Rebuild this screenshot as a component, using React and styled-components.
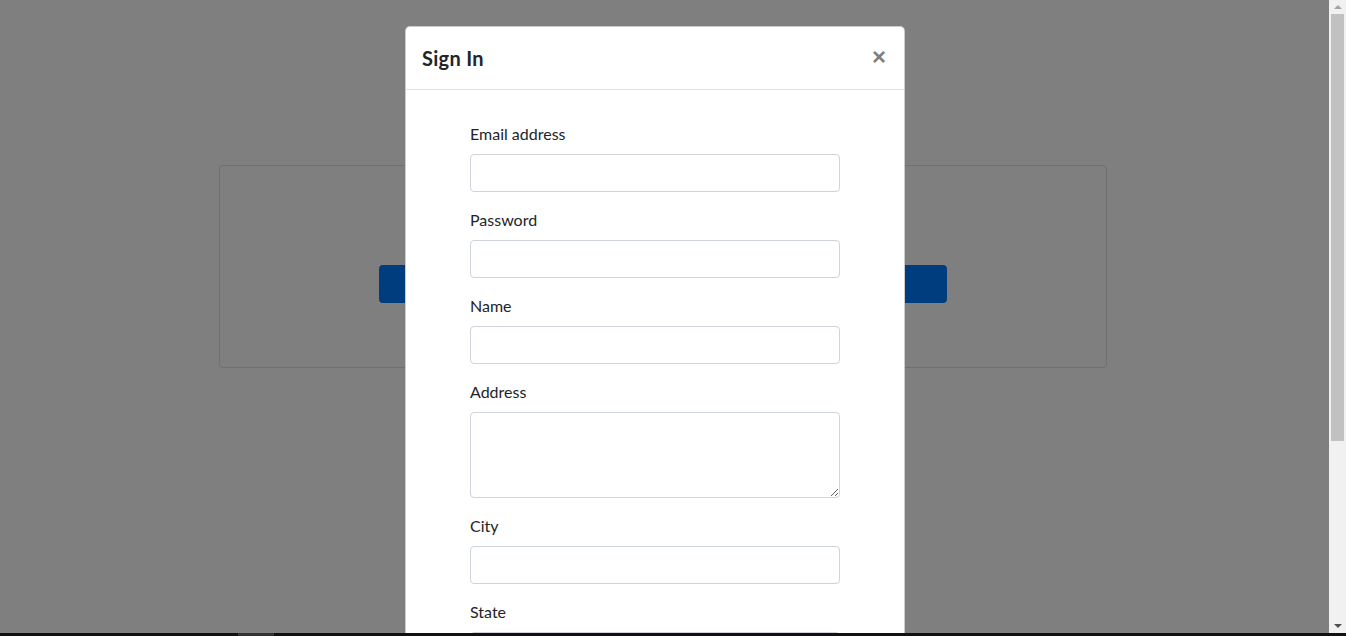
import React from 'react'
import styled, { createGlobalStyle } from 'styled-components'

const GlobalStyle = createGlobalStyle`
  html, body {
    margin: 0;
    padding: 0;
    overflow: hidden;
  }
  body {
    font-family: 'Lato', 'Open Sans', sans-serif;
    color: #212529;
  }
  * {
    box-sizing: border-box;
  }
`

const Screen = styled.div`
  width: 1346px;
  height: 636px;
  display: flex;
  flex-direction: column;
`

const Window = styled.div`
  flex: 1;
  display: flex;
  min-height: 0;
`

const Viewport = styled.div`
  position: relative;
  flex: 1;
  background: #fff;
  overflow: hidden;
`

const Page = styled.div`
  padding-top: 165px;
  padding-right: 3px;
`

const Card = styled.div`
  width: 888px;
  height: 203px;
  margin: 0 auto;
  border: 1px solid rgba(0, 0, 0, 0.125);
  border-radius: 4px;
  padding: 20px 159px;
  text-align: center;
`

const CardTitle = styled.h4`
  margin: 16px 0 39px;
  font-size: 24px;
  font-weight: 500;
  line-height: 24px;
`

const PrimaryButton = styled.button`
  display: block;
  width: 568px;
  height: 38px;
  border: none;
  border-radius: 4px;
  background: #007bff;
  color: #fff;
  font-family: inherit;
  font-size: 16px;
`

const Backdrop = styled.div`
  position: absolute;
  inset: 0;
  background: rgba(0, 0, 0, 0.5);
  display: flex;
  justify-content: center;
  align-items: flex-start;
  padding: 26px 19px 0 0;
`

const Modal = styled.div`
  width: 500px;
  background: #fff;
  border: 1px solid rgba(0, 0, 0, 0.2);
  border-radius: 5px;
  display: flex;
  flex-direction: column;
`

const ModalHeader = styled.div`
  display: flex;
  align-items: flex-start;
  padding: 16px;
  border-bottom: 1px solid #dee2e6;
`

const ModalTitle = styled.h5`
  margin: 0;
  font-size: 20px;
  font-weight: 700;
  line-height: 30px;
  letter-spacing: 0.3px;
  color: #212529;
`

const CloseButton = styled.button`
  margin: -17px -14px -16px auto;
  padding: 16px;
  border: none;
  background: transparent;
  font-family: 'Liberation Sans', Arial, sans-serif;
  font-size: 24px;
  font-weight: 700;
  line-height: 30px;
  color: #000;
  opacity: 0.5;
`

const ModalBody = styled.div`
  padding: 16px;
`

const Form = styled.form`
  width: 370px;
  margin: 16px auto 0;
`

const Group = styled.div`
  margin-bottom: 16px;
`

const Label = styled.label`
  display: inline-block;
  margin-bottom: 8px;
  font-size: 16px;
  line-height: 24px;
  color: #212529;
`

const Input = styled.input`
  display: block;
  width: 100%;
  height: 38px;
  padding: 6px 12px;
  border: 1px solid #ced4da;
  border-radius: 4px;
  font-family: inherit;
  font-size: 16px;
`

const TextArea = styled.textarea`
  display: block;
  width: 100%;
  height: 86px;
  padding: 6px 12px;
  border: 1px solid #ced4da;
  border-radius: 4px;
  font-family: inherit;
  font-size: 16px;
  resize: vertical;
`

const Scrollbar = styled.div`
  width: 17px;
  background: #f1f1f1;
  display: flex;
  flex-direction: column;
  align-items: center;
`

const Arrow = styled.div`
  width: 0;
  height: 0;
  margin: 5px 0;
  border-left: 4px solid transparent;
  border-right: 4px solid transparent;
  ${(p) =>
    p.$down
      ? `border-top: 4px solid #505050; margin-top: auto;`
      : `border-bottom: 4px solid #a3a3a3;`}
`

const Thumb = styled.div`
  width: 13px;
  height: 427px;
  background: #c1c1c1;
`

const TaskStrip = styled.div`
  height: 3px;
  background: #111;
  padding-left: 238px;
`

const StripMark = styled.div`
  width: 36px;
  height: 3px;
  background: #333;
`

const fields = [
  { label: 'Email address', type: 'email' },
  { label: 'Password', type: 'password' },
  { label: 'Name', type: 'text' },
  { label: 'Address', area: true },
  { label: 'City', type: 'text' },
  { label: 'State', type: 'text' },
]

export default function App() {
  return (
    <Screen>
      <GlobalStyle />
      <Window>
        <Viewport>
          <Page>
            <Card>
              <CardTitle>Welcome</CardTitle>
              <PrimaryButton>Sign In</PrimaryButton>
            </Card>
          </Page>
          <Backdrop>
            <Modal>
              <ModalHeader>
                <ModalTitle>Sign In</ModalTitle>
                <CloseButton aria-label="Close">×</CloseButton>
              </ModalHeader>
              <ModalBody>
                <Form>
                  {fields.map((f) => (
                    <Group key={f.label}>
                      <Label>{f.label}</Label>
                      {f.area ? <TextArea /> : <Input type={f.type} />}
                    </Group>
                  ))}
                </Form>
              </ModalBody>
            </Modal>
          </Backdrop>
        </Viewport>
        <Scrollbar>
          <Arrow />
          <Thumb />
          <Arrow $down />
        </Scrollbar>
      </Window>
      <TaskStrip>
        <StripMark />
      </TaskStrip>
    </Screen>
  )
}
